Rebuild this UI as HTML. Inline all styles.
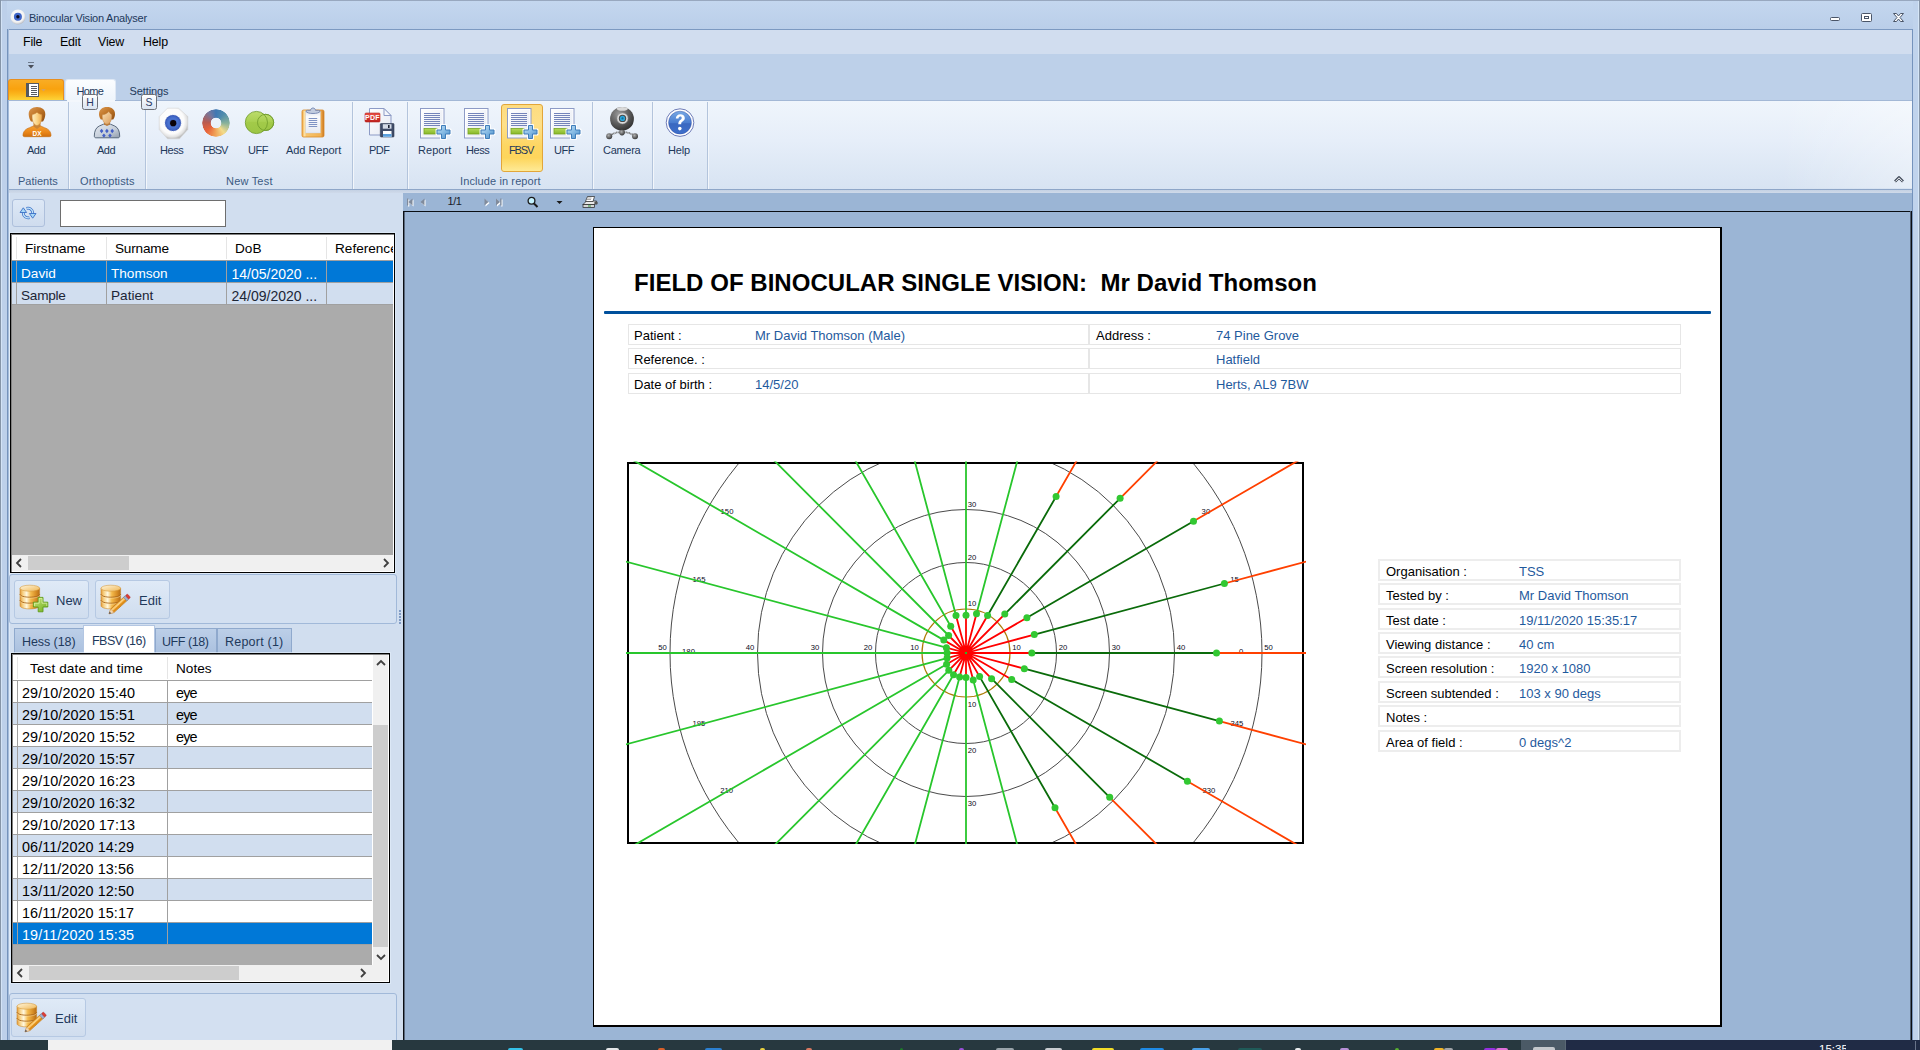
<!DOCTYPE html>
<html><head><meta charset="utf-8"><title>Binocular Vision Analyser</title>
<style>
*{box-sizing:border-box;margin:0;padding:0}
html,body{width:1920px;height:1050px;overflow:hidden;background:#bfd3ed;font-family:"Liberation Sans",sans-serif;}
.a{position:absolute}
.t{position:absolute;white-space:pre;line-height:1;}
.rb{color:#1e395b;font-size:11px}
.g{color:#000;font-size:13.6px}
.r13{font-size:13px;color:#000}
.bl{color:#1f5a9d}
svg{position:absolute;overflow:visible}
</style></head><body>
<!-- window frame -->
<div class="a" style="left:0;top:0;width:1920px;height:1040px;background:#bdd0ea"></div><div class="a" style="left:0;top:0;width:1920px;height:29px;background:linear-gradient(#c4d7ef,#bacee9)"></div>
<div class="a" style="left:0;top:0;width:1920px;height:1px;background:#98a8bf"></div>
<div class="a" style="left:0;top:0;width:1px;height:1040px;background:#8695a8"></div>
<div class="a" style="left:1px;top:1px;width:1px;height:1039px;background:#d3e3f6"></div>
<div class="a" style="left:2px;top:1px;width:5px;height:1039px;background:#bdd0ea"></div>
<div class="a" style="left:1913px;top:1px;width:5px;height:1039px;background:#c0d3ec"></div>
<div class="a" style="left:1918px;top:1px;width:1px;height:1039px;background:#d6e6f7"></div>
<div class="a" style="left:1919px;top:0;width:1px;height:1040px;background:#8695a8"></div>
<!-- title -->
<svg style="left:10px;top:9px" width="16" height="16" viewBox="0 0 16 16"><defs><radialGradient id="eg" cx="45%" cy="40%" r="60%"><stop offset="0" stop-color="#fff"/><stop offset=".75" stop-color="#f2f2f2"/><stop offset="1" stop-color="#b9bcc4"/></radialGradient></defs><circle cx="8" cy="8" r="7.5" fill="url(#eg)"/><circle cx="7.9" cy="7.8" r="4" fill="#3f66c8"/><circle cx="7.9" cy="7.8" r="1.7" fill="#0a0a20"/></svg>
<div class="t" style="left:29px;top:13px;font-size:11px;color:#1e395b;letter-spacing:-0.24px">Binocular Vision Analyser</div>
<!-- window buttons -->
<svg style="left:1828px;top:10px" width="80" height="14" viewBox="0 0 80 14"><g fill="#fff" stroke="#4a5568" stroke-width="1"><rect x="2.5" y="7.5" width="9" height="3" rx="1"/><rect x="33.500" y="3.500" width="10" height="8" rx="1"/><rect x="36.500" y="6.500" width="4" height="2" /><path d="M65.500 3.500h3l2 2.500l2-2.500h3l-3.500 4l3.500 4h-3l-2-2.500l-2 2.500h-3l3.500-4z"/></g></svg>
<!-- inner area -->
<div class="a" style="left:7px;top:29px;width:1906px;height:1px;background:#7c99c1"></div>
<div class="a" style="left:7px;top:29px;width:1px;height:1011px;background:#7593bc"></div><div class="a" style="left:8px;top:29px;width:1px;height:1011px;background:#a4bbda"></div>
<div class="a" style="left:1912px;top:29px;width:1px;height:1011px;background:#7593bc"></div>
<div class="a" style="left:9px;top:30px;width:1903px;height:24px;background:#d1ddef"></div>
<div class="a" style="left:9px;top:54px;width:1903px;height:46px;background:#bdd0e9"></div>
<div class="t" style="left:23px;top:35.500px;font-size:12.400px;color:#000;letter-spacing:-.15px">File</div>
<div class="t" style="left:60px;top:35.500px;font-size:12.400px;color:#000;letter-spacing:-.15px">Edit</div>
<div class="t" style="left:98px;top:35.500px;font-size:12.400px;color:#000;letter-spacing:-.15px">View</div>
<div class="t" style="left:143px;top:35.500px;font-size:12.400px;color:#000;letter-spacing:-.15px">Help</div>
<!-- QAT -->
<svg style="left:27px;top:61px" width="8" height="9" viewBox="0 0 8 9"><rect x="1" y="1" width="6" height="1" fill="#6d7a8c"/><path d="M1 4h6l-3 3.500z" fill="#4a4f5a"/></svg>
<!-- app button + tabs -->
<div class="a" style="left:8px;top:79px;width:56px;height:21px;border:1px solid #e88f1f;border-bottom:none;border-radius:3px 3px 0 0;background:linear-gradient(#f9ad25 0%,#f9a20e 45%,#fbb61c 70%,#fdd338 100%)"></div>
<svg style="left:26px;top:83px" width="22" height="14" viewBox="0 0 22 14"><rect x=".5" y=".5" width="12" height="13" fill="#fff" stroke="#55595f"/><rect x="1" y="1" width="2" height="12" fill="#55595f"/><g fill="#55595f"><rect x="5" y="3" width="6" height="1"/><rect x="5" y="5" width="6" height="1"/><rect x="5" y="7" width="6" height="1"/><rect x="5" y="9" width="6" height="1"/><rect x="5" y="11" width="6" height="1"/></g><path d="M15 6h5l-2.500 2.500z" fill="#d9a45a"/></svg>
<div class="a" style="left:65px;top:79px;width:51px;height:22px;border:1px solid #dfe8f4;border-bottom:none;border-radius:3px 3px 0 0;background:linear-gradient(#fbfdff,#eef4fb)"></div>
<div class="t rb" style="left:76.500px;top:85.500px;letter-spacing:-.65px">Home</div>
<div class="t rb" style="left:129.500px;top:85.500px;letter-spacing:-.1px">Settings</div>
<!-- ribbon -->
<div class="a" style="left:9px;top:100px;width:1903px;height:90px;background:linear-gradient(#eff5fc 0%,#e6eef9 45%,#d7e3f2 100%);border-top:1px solid #a3b8d6;border-bottom:1px solid #8ea6c8"></div>
<div class="a" style="left:67px;top:100px;width:48px;height:2px;background:#f3f7fc"></div>
<div class="a" style="left:1780px;top:101px;width:132px;height:87px;background:linear-gradient(90deg,rgba(255,255,255,0),rgba(255,255,255,.35))"></div>
<!-- group separators -->
<div class="a sep" style="left:68px"></div><div class="a sep" style="left:145px"></div><div class="a sep" style="left:352px"></div><div class="a sep" style="left:407px"></div><div class="a sep" style="left:592px"></div><div class="a sep" style="left:652px"></div><div class="a sep" style="left:707px"></div>
<style>.sep{top:102px;width:2px;height:87px;background:linear-gradient(90deg,#b3c4dc 0 1px,#f2f6fb 1px 2px)}</style>
<!-- FBSV highlight -->
<div class="a" style="left:501px;top:104px;width:42px;height:68px;border:1px solid #e2a63a;border-radius:3px;background:linear-gradient(#fddc80 0%,#fee08a 30%,#fdd662 62%,#fdd55c 80%,#feea96 100%)"></div>
<!-- labels -->
<div class="t rb" style="left:27px;top:145px;letter-spacing:-0.5px">Add</div>
<div class="t rb" style="left:97px;top:145px;letter-spacing:-0.5px">Add</div>
<div class="t rb" style="left:160px;top:145px;letter-spacing:-0.41px">Hess</div>
<div class="t rb" style="left:203px;top:145px;letter-spacing:-1.1px">FBSV</div>
<div class="t rb" style="left:248px;top:145px;letter-spacing:-0.45px">UFF</div>
<div class="t rb" style="left:286px;top:145px;letter-spacing:-0.05px">Add Report</div>
<div class="t rb" style="left:369px;top:145px;letter-spacing:-0.5px">PDF</div>
<div class="t rb" style="left:418px;top:145px;letter-spacing:0.05px">Report</div>
<div class="t rb" style="left:466px;top:145px;letter-spacing:-0.41px">Hess</div>
<div class="t rb" style="left:509px;top:145px;letter-spacing:-1.1px">FBSV</div>
<div class="t rb" style="left:554px;top:145px;letter-spacing:-0.45px">UFF</div>
<div class="t rb" style="left:603px;top:145px;letter-spacing:-0.3px">Camera</div>
<div class="t rb" style="left:668px;top:145px;letter-spacing:-0.17px">Help</div>
<div class="t rb" style="left:18px;top:176px;color:#3b5a82">Patients</div>
<div class="t rb" style="left:80px;top:176px;color:#3b5a82;letter-spacing:0.13px">Orthoptists</div>
<div class="t rb" style="left:226px;top:176px;color:#3b5a82;letter-spacing:0.2px">New Test</div>
<div class="t rb" style="left:460px;top:176px;color:#3b5a82;letter-spacing:0.11px">Include in report</div>
<!-- collapse chevron -->
<svg style="left:1894px;top:175px" width="10" height="8" viewBox="0 0 10 8"><path d="M1 6.500L5 2.500L9 6.500" fill="none" stroke="#3c4656" stroke-width="2.600" stroke-linejoin="round"/><path d="M1.300 6.500L5 2.800L8.700 6.500" fill="none" stroke="#fff" stroke-width="1" /></svg>
<!-- keytips -->
<div class="a kt" style="left:82px">H</div><div class="a kt" style="left:141px">S</div>
<style>.kt{top:94px;width:16px;height:16px;border:1px solid #6e7178;border-radius:2.500px;background:linear-gradient(#fff,#dae4f2);font-size:10.500px;color:#2a3a66;text-align:center;line-height:14px}</style>
<!-- ICON defs -->
<svg width="0" height="0" style="left:0;top:0"><defs>
<linearGradient id="hair" x1="0" y1="0" x2="1" y2="1"><stop offset="0" stop-color="#dc9850"/><stop offset=".5" stop-color="#bd7326"/><stop offset="1" stop-color="#8f4d10"/></linearGradient>
<linearGradient id="face" x1="0" y1="0" x2="1" y2="0"><stop offset="0" stop-color="#fdeec4"/><stop offset=".5" stop-color="#fbd588"/><stop offset="1" stop-color="#eca94a"/></linearGradient>
<linearGradient id="face2" x1="0" y1="0" x2="1" y2="1"><stop offset="0" stop-color="#fbe0b4"/><stop offset="1" stop-color="#d99a58"/></linearGradient>
<linearGradient id="obody" x1="0" y1="0" x2="0" y2="1"><stop offset="0" stop-color="#f6a233"/><stop offset=".6" stop-color="#ea8618"/><stop offset="1" stop-color="#d06f0c"/></linearGradient>
<linearGradient id="gbody" x1="0" y1="0" x2="1" y2="1"><stop offset="0" stop-color="#e4e9f0"/><stop offset=".6" stop-color="#c3ccd8"/><stop offset="1" stop-color="#8f9bab"/></linearGradient>
<radialGradient id="ball" cx="45%" cy="42%" r="58%"><stop offset="0" stop-color="#fff"/><stop offset=".72" stop-color="#fbfbfb"/><stop offset=".9" stop-color="#e2e2e2"/><stop offset="1" stop-color="#bdbdbd"/></radialGradient>
<radialGradient id="iris" cx="50%" cy="50%" r="50%"><stop offset="0" stop-color="#2a46a8"/><stop offset=".55" stop-color="#4b74d0"/><stop offset=".85" stop-color="#3e63c4"/><stop offset="1" stop-color="#2d4aa8"/></radialGradient>
<linearGradient id="grn" x1="0" y1="0" x2="0" y2="1"><stop offset="0" stop-color="#bcdc6c"/><stop offset=".45" stop-color="#a9d052"/><stop offset=".5" stop-color="#a2ca49"/><stop offset="1" stop-color="#9cc544"/></linearGradient>
<linearGradient id="clipb" x1="0" y1="0" x2="1" y2="0"><stop offset="0" stop-color="#f0a63e"/><stop offset=".12" stop-color="#fde3a8"/><stop offset=".2" stop-color="#f7c56e"/><stop offset=".85" stop-color="#f2b050"/><stop offset="1" stop-color="#c9741c"/></linearGradient>
<linearGradient id="paper" x1="0" y1="0" x2="0" y2="1"><stop offset="0" stop-color="#dfe4ee"/><stop offset=".25" stop-color="#fafbfd"/><stop offset="1" stop-color="#e6eaf2"/></linearGradient>
<linearGradient id="pdfr" x1="0" y1="0" x2="0" y2="1"><stop offset="0" stop-color="#ea5148"/><stop offset="1" stop-color="#bf201c"/></linearGradient>
<linearGradient id="pg" x1="0" y1="0" x2="1" y2="1"><stop offset="0" stop-color="#ffffff"/><stop offset="1" stop-color="#e4e8f2"/></linearGradient>
<linearGradient id="gbar" x1="0" y1="0" x2="0" y2="1"><stop offset="0" stop-color="#b3d958"/><stop offset="1" stop-color="#86b727"/></linearGradient>
<linearGradient id="plus" x1="0" y1="0" x2="1" y2="1"><stop offset="0" stop-color="#c4e0f5"/><stop offset=".5" stop-color="#86bbe4"/><stop offset="1" stop-color="#4a8cc8"/></linearGradient>
<radialGradient id="cam" cx="38%" cy="30%" r="75%"><stop offset="0" stop-color="#9a9a9a"/><stop offset=".5" stop-color="#636363"/><stop offset="1" stop-color="#2e2e2e"/></radialGradient>
<radialGradient id="leg" cx="40%" cy="35%" r="70%"><stop offset="0" stop-color="#b0b0b0"/><stop offset="1" stop-color="#303030"/></radialGradient>
<linearGradient id="hlp" x1="0" y1="0" x2="0" y2="1"><stop offset="0" stop-color="#78a9e4"/><stop offset=".5" stop-color="#4a7dd0"/><stop offset=".55" stop-color="#3a68c0"/><stop offset="1" stop-color="#3d6fcb"/></linearGradient>
<linearGradient id="dbg" x1="0" y1="0" x2="1" y2="0"><stop offset="0" stop-color="#e39a3a"/><stop offset=".14" stop-color="#f7cf80"/><stop offset=".34" stop-color="#fff8e0"/><stop offset=".55" stop-color="#f4ba4c"/><stop offset=".8" stop-color="#d88f28"/><stop offset="1" stop-color="#b56d16"/></linearGradient>
<linearGradient id="dbt" x1="0" y1="0" x2="1" y2="1"><stop offset="0" stop-color="#fff6dc"/><stop offset="1" stop-color="#f0b858"/></linearGradient>
<linearGradient id="gplus" x1="0" y1="0" x2="1" y2="1"><stop offset="0" stop-color="#c6e67a"/><stop offset="1" stop-color="#6fae1e"/></linearGradient>
<g id="docplus">
  <rect x=".5" y=".5" width="23.500" height="29.500" fill="#fff" stroke="#8d9bc6"/>
  <rect x="2" y="2" width="20.500" height="26.500" fill="url(#pg)"/>
  <g fill="#7484ba"><rect x="4" y="5" width="16" height="1"/><rect x="4" y="7" width="16" height="1"/><rect x="4" y="9" width="16" height="1"/><rect x="4" y="11" width="16" height="1"/><rect x="4" y="13" width="16" height="1"/><rect x="4" y="15" width="16" height="1"/><rect x="4" y="17" width="16" height="1"/></g>
  <rect x="4" y="20.500" width="13" height="5.500" fill="url(#gbar)" stroke="#78a622" stroke-width=".8"/>
  <path d="M21 17h5v4.500h4.500v5h-4.500v4.500h-5v-4.500h-4.500v-5h4.500z" fill="#fff" stroke="#fff" stroke-width="2" stroke-linejoin="round" opacity=".9"/>
  <path d="M21.500 17.500h4v4.500h4.500v4h-4.500v4.500h-4v-4.500h-4.500v-4h4.500z" fill="url(#plus)" stroke="#3f7dba" stroke-width="1" stroke-linejoin="round"/>
</g>
<g id="dbcyl">
  <path d="M0 3.500v19c0 2 4.500 3.500 10 3.500s10-1.500 10-3.500v-19z" fill="url(#dbg)" stroke="#c8862a" stroke-width=".6"/>
  <path d="M0 10c0 2 4.500 3.300 10 3.300s10-1.300 10-3.300M0 16.500c0 2 4.500 3.300 10 3.300s10-1.300 10-3.300" fill="none" stroke="#a8641a" stroke-width="1"/><path d="M0 11c0 2 4.500 3.300 10 3.300s10-1.300 10-3.300M0 17.500c0 2 4.500 3.300 10 3.300s10-1.300 10-3.300" fill="none" stroke="#ffe9b4" stroke-width=".6" opacity=".8"/>
  <ellipse cx="10" cy="3.500" rx="10" ry="3.300" fill="url(#dbt)" stroke="#d59a3e" stroke-width=".6"/>
</g>
<g id="pencil" transform="rotate(-42.300)"><path d="M0 0l4.500-2.400h19.300v4.800h-19.300z" fill="#f2a52e" stroke="#b9741a" stroke-width=".6" stroke-linejoin="round"/><path d="M4.500-.9h17.500" stroke="#fde7ad" stroke-width="1.300" stroke-dasharray="1 .35"/><path d="M4.500 1.300h17.500" stroke="#d98918" stroke-width="1.200"/><path d="M0 0l4.500-2.400v4.800z" fill="#f3d9b4" stroke="#c99a6a" stroke-width=".4"/><path d="M0 0l1.900-1v2z" fill="#2c3550"/><rect x="21.800" y="-2.400" width="2.600" height="4.800" fill="#9fb0d0" stroke="#5f73a0" stroke-width=".4"/><rect x="24.400" y="-2.400" width="2.600" height="4.800" rx="1" fill="#dc3c34" stroke="#a8241f" stroke-width=".4"/></g>
</defs></svg>
<!-- patient add -->
<svg style="left:21px;top:106px" width="32" height="32" viewBox="0 0 32 32">
<path d="M2 29.500c0-4 2.500-6.500 6.500-7.800l4.500-2h6l4.500 2c4 1.300 6.500 3.800 6.500 7.800c0 .8-.5 1.200-1.500 1.200h-25c-1 0-1.500-.4-1.500-1.200z" fill="url(#obody)" stroke="#c56a0e" stroke-width=".6"/>
<path d="M12.500 17h7v3.500l-3.500 2.500l-3.500-2.500z" fill="#c98538"/>
<path d="M16 1c-5 0-8.500 2.800-8.300 7.500c.1 2.500 1 5 2.300 7l12 0c1.300-2 2.200-4.500 2.300-7c.2-4.700-3.300-7.500-8.300-7.500z" fill="url(#hair)"/>
<path d="M11.200 8.500c1.800-.2 3.300-1 4.800-2.300c1.500 1.300 3 2.100 4.800 2.300c.3 2.500.1 5-.8 7.300c-.8 2-2.300 3.700-4 3.700s-3.200-1.700-4-3.700c-.9-2.300-1.100-4.800-.8-7.300z" fill="url(#face)" stroke="#c98538" stroke-width=".5"/>
<text x="16" y="30" font-family="Liberation Sans" font-weight="bold" font-size="6.500" fill="#fff" text-anchor="middle">DX</text>
</svg>
<!-- orthoptist add -->
<svg style="left:90px;top:106px" width="32" height="33" viewBox="0 0 32 33">
<path d="M4.300 30c0-4.500 1.500-8.500 5-10l4.200-1.800h7l4.200 1.800c3.500 1.500 5 5.500 5 10c0 1.200-.6 1.800-1.800 1.800h-21.800c-1.200 0-1.800-.6-1.800-1.800z" fill="url(#gbody)" stroke="#4c5c70" stroke-width=".9"/>
<g fill="#4560c6"><path d="M11.6 22.8l1.8 2.2l-1.8 2.2l-1.8-2.2zM16.9 22.8l1.8 2.2l-1.8 2.2l-1.8-2.2zM22.2 22.8l1.8 2.2l-1.8 2.2l-1.8-2.2zM13.9 27.400000000000002l1.8 2.2l-1.8 2.2l-1.8-2.2zM20 27.400000000000002l1.8 2.2l-1.8 2.2l-1.8-2.2z"/></g>
<path d="M14 15.500h6v3l-3 1.500l-3-1.500z" fill="#b97a3a"/>
<path d="M17 1c-4.800 0-8 2.700-8 7c0 2 .7 4 1.800 5.500h12.400c1.100-1.500 1.800-3.500 1.800-5.500c0-4.300-3.200-7-8-7z" fill="url(#hair)"/>
<path d="M12.300 8.800c2.700-.2 5-1.400 6.500-3.300c.9 1.500 2 2.500 3 3.200c.2 2.200-.1 4.300-.9 6.200c-.8 1.800-2.200 3.300-3.900 3.300s-3.100-1.500-3.900-3.300c-.8-1.900-1-4-.8-6.100z" fill="url(#face2)" stroke="#b97a3a" stroke-width=".4"/>
</svg>
<!-- hess eye -->
<svg style="left:157px;top:107px" width="33" height="33" viewBox="0 0 33 33">
<path d="M10.500 1.200h11l9.300 8.300v13l-8.300 9.300h-12l-8.300-9.300v-13z" fill="url(#ball)" stroke="#d4d4d4" stroke-width=".6" stroke-linejoin="round"/>
<circle cx="16" cy="16" r="8" fill="url(#iris)"/><circle cx="16" cy="16" r="8" fill="none" stroke="#6f8fe0" stroke-width="1" stroke-dasharray="1 1.300" opacity=".6"/><circle cx="16.200" cy="16.200" r="3.100" fill="#0a0208"/>
</svg>
<!-- fbsv ring -->
<div class="a" style="left:202px;top:109px;width:28px;height:28px;border-radius:50%;background:conic-gradient(from 0deg,#3f78b3 0deg,#4f8cad 40deg,#86b09b 90deg,#f3dc8a 140deg,#f0a055 185deg,#e7623a 230deg,#b85a50 275deg,#76789e 325deg,#3f78b3 360deg);-webkit-mask:radial-gradient(circle,transparent 0 5px,#000 5.600px 13.400px,transparent 14px);mask:radial-gradient(circle,transparent 0 5px,#000 5.600px 13.400px,transparent 14px)"></div>
<!-- uff circles -->
<svg style="left:244px;top:110px" width="32" height="26" viewBox="0 0 32 26">
<circle cx="21.600" cy="12.400" r="8.100" fill="url(#grn)" stroke="#6f9a2a" stroke-width=".8"/>
<circle cx="12.400" cy="12.500" r="11.100" fill="url(#grn)" stroke="#6f9a2a" stroke-width=".8"/>
<circle cx="21.600" cy="12.400" r="8.100" fill="none" stroke="#6f9a2a" stroke-width=".8"/>
</svg>
<!-- clipboard -->
<svg style="left:301px;top:107px" width="24" height="31" viewBox="0 0 24 31">
<rect x="1" y="3" width="22" height="27" rx="1.500" fill="url(#clipb)" stroke="#d98a2a" stroke-width=".8"/>
<rect x="4.600" y="4.500" width="14.800" height="21.500" fill="url(#paper)" stroke="#c7cdd9" stroke-width=".4"/>
<g fill="#7f93c4"><rect x="7.700" y="11" width="8.500" height="1"/><rect x="7.700" y="13" width="8.500" height="1"/><rect x="7.700" y="15" width="8.500" height="1"/><rect x="7.700" y="17" width="8.500" height="1"/><rect x="7.700" y="19" width="8.500" height="1"/></g>
<path d="M5 4.500c0-.8.500-1.200 1.500-1.200h3c.3-1.500 1.200-2.300 2.500-2.300s2.200.8 2.500 2.300h3c1 0 1.500.4 1.500 1.200c-1 1.300-3.500 2-7 2s-6-.7-7-2z" fill="#c3cde0" stroke="#6478a8" stroke-width=".8"/>
</svg>
<!-- pdf -->
<svg style="left:364px;top:107px" width="32" height="31" viewBox="0 0 32 31">
<path d="M5.500 1.500h14.500l7 7v19.500h-21.500z" fill="url(#pg)" stroke="#8d9bc6" stroke-linejoin="round"/>
<path d="M20 1.500v7h7z" fill="#f4f6fb" stroke="#8d9bc6" stroke-linejoin="round"/>
<rect x="1" y="6" width="15" height="9" rx="1" fill="url(#pdfr)" stroke="#b52620" stroke-width=".6"/>
<text x="8.500" y="13.300" font-family="Liberation Sans" font-weight="bold" font-size="7" fill="#fff" text-anchor="middle" letter-spacing=".3">PDF</text>
<rect x="16.300" y="16.500" width="13.700" height="13.500" rx=".8" fill="#3f4c68" stroke="#2f3950" stroke-width=".6"/>
<rect x="18.800" y="17.200" width="8.700" height="4.500" fill="#d4dbe7"/><rect x="24" y="18" width="1.600" height="3" fill="#1c2233"/>
<rect x="19" y="24" width="8.500" height="6" fill="#fff"/><rect x="19" y="27" width="8.500" height="2.800" fill="#5a9fdc"/>
</svg>
<!-- include in report doc+plus -->
<svg style="left:420px;top:108px" width="31" height="31" viewBox="0 0 31 31"><use href="#docplus"/></svg>
<svg style="left:464px;top:108px" width="31" height="31" viewBox="0 0 31 31"><use href="#docplus"/></svg>
<svg style="left:507px;top:108px" width="31" height="31" viewBox="0 0 31 31"><use href="#docplus"/></svg>
<svg style="left:550px;top:108px" width="31" height="31" viewBox="0 0 31 31"><use href="#docplus"/></svg>
<!-- camera -->
<svg style="left:606px;top:106px" width="33" height="34" viewBox="0 0 33 34">
<path d="M3 30.300q6.500-5 13-3.800q6.500-1.200 13 3.800" fill="none" stroke="#7a7a7a" stroke-width="1.800" stroke-dasharray="1.1 .5"/>
<circle cx="16" cy="12.900" r="11.900" fill="url(#cam)"/>
<ellipse cx="16.300" cy="2.800" rx="5.600" ry="1.900" fill="#d9d9d9"/>
<circle cx="16.500" cy="12.400" r="5.500" fill="#dcdcdc" stroke="#9a9a9a" stroke-width=".5"/>
<circle cx="16.500" cy="12.400" r="3.700" fill="#4a4a4a"/>
<circle cx="16.500" cy="12.400" r="2.600" fill="#2ba6da"/><circle cx="16.500" cy="12.400" r="1.100" fill="#136f9a"/>
<circle cx="16" cy="26.600" r="2.800" fill="url(#leg)"/>
<circle cx="3.200" cy="30.300" r="3" fill="url(#leg)"/>
<circle cx="29" cy="30.300" r="3" fill="url(#leg)"/>
</svg>
<!-- help -->
<svg style="left:665px;top:108px" width="30" height="30" viewBox="0 0 30 30">
<circle cx="15" cy="14.600" r="13.800" fill="#fff" stroke="#4a5aa5" stroke-width=".8"/>
<circle cx="15" cy="14.600" r="11.400" fill="url(#hlp)" stroke="#3a56a8" stroke-width=".5"/>
<path d="M10.800 10.600c.2-2.800 1.900-4.400 4.500-4.400c2.700 0 4.500 1.500 4.500 3.800c0 1.700-.9 2.600-2.200 3.500c-1.100.8-1.400 1.300-1.400 2.700h-2.900c0-2.200.5-3.200 1.900-4.200c1.100-.8 1.500-1.200 1.500-2c0-.9-.6-1.400-1.500-1.400c-1 0-1.600.7-1.700 2z" fill="#fff"/>
<circle cx="14.800" cy="20.600" r="1.800" fill="#fff"/>
</svg>
<!-- below ribbon strip + left panel bg -->
<div class="a" style="left:9px;top:190px;width:1903px;height:3px;background:linear-gradient(#c4d1e3,#cfdaea)"></div>
<div class="a" style="left:9px;top:193px;width:394px;height:847px;background:#d1deef"></div><div class="a" style="left:9px;top:193px;width:1px;height:847px;background:#dce9f9"></div>
<!-- refresh button + textbox -->
<div class="a" style="left:12px;top:199px;width:33px;height:28px;border:1px solid #aec0dc;border-radius:3px;background:linear-gradient(#dde8f6,#cfdcee)"></div>
<svg style="left:20px;top:207px" width="16" height="12" viewBox="0 0 16 12"><g fill="none" stroke-linecap="butt"><path d="M3.300 5v1.200a4.700 4.700 0 0 0 6.200 4.400" stroke="#3c70c6" stroke-width="2.800"/><path d="M12.700 7v-1.200a4.700 4.700 0 0 0-6.200-4.400" stroke="#3c70c6" stroke-width="2.800"/><path d="M3.300 5v1.200a4.700 4.700 0 0 0 6.200 4.400" stroke="#c6e8fc" stroke-width="1.200"/><path d="M12.700 7v-1.200a4.700 4.700 0 0 0-6.200-4.400" stroke="#c6e8fc" stroke-width="1.200"/></g><path d="M0 5.500L3.300 .8L6.600 5.500z" fill="#a8d8f8" stroke="#3c70c6" stroke-width=".9" stroke-linejoin="round"/><path d="M9.400 6.500L12.700 11.200L16 6.500z" fill="#a8d8f8" stroke="#3c70c6" stroke-width=".9" stroke-linejoin="round"/></svg>
<div class="a" style="left:60px;top:200px;width:166px;height:27px;border:1px solid #6e6e6e;background:#fff"></div>
<!-- grid 1 -->
<div class="a" style="left:10px;top:233px;width:385px;height:340px;background:#ababab;border:1px solid #000;box-shadow:inset 1px 1px 0 #828282,inset -1px -1px 0 #fff,0 0 0 1px rgba(225,236,250,.7)"></div>
<div class="a" style="left:12px;top:235px;width:381px;height:26px;background:#fff;border-bottom:1px solid #a0a0a0"></div>
<div class="a" style="left:16px;top:237px;width:1px;height:22px;background:#e5e5e5"></div>
<div class="a" style="left:106px;top:237px;width:1px;height:22px;background:#e5e5e5"></div>
<div class="a" style="left:226px;top:237px;width:1px;height:22px;background:#e5e5e5"></div>
<div class="a" style="left:326px;top:237px;width:1px;height:22px;background:#e5e5e5"></div>
<div class="a" style="left:12px;top:261px;width:381px;height:22px;background:#0078d7;border-bottom:1px solid #a0a0a0"></div>
<div class="a" style="left:12px;top:283px;width:381px;height:22px;background:#d1deef;border-bottom:1px solid #a0a0a0"></div>
<div class="a" style="left:16px;top:261px;width:1px;height:43px;background:#a0a0a0"></div>
<div class="a" style="left:106px;top:261px;width:1px;height:43px;background:#a0a0a0"></div>
<div class="a" style="left:226px;top:261px;width:1px;height:43px;background:#a0a0a0"></div>
<div class="a" style="left:326px;top:261px;width:1px;height:43px;background:#a0a0a0"></div>
<div class="t g" style="left:25px;top:242px">Firstname</div>
<div class="t g" style="left:115px;top:242px;letter-spacing:-.2px">Surname</div>
<div class="t g" style="left:235px;top:242px">DoB</div>
<div class="a" style="left:327px;top:236px;width:66px;height:24px;overflow:hidden"><div class="t g" style="left:8px;top:6px">Reference</div></div>
<div class="t g" style="left:21px;top:267px;color:#fff">David</div>
<div class="t g" style="left:111px;top:267px;color:#fff">Thomson</div>
<div class="t g" style="left:231.500px;top:267px;color:#fff;font-size:14px">14/05/2020 ...</div>
<div class="t g" style="left:21px;top:289px;color:#1c2536;letter-spacing:-.25px">Sample</div>
<div class="t g" style="left:111px;top:289px;color:#1c2536">Patient</div>
<div class="t g" style="left:231.500px;top:289px;font-size:14px;color:#1c2536">24/09/2020 ...</div>
<!-- grid1 hscroll -->
<div class="a" style="left:12px;top:555px;width:381px;height:16px;background:#f0f0f0"></div>
<div class="a" style="left:28px;top:556px;width:101px;height:14px;background:#cdcdcd"></div>
<svg style="left:15px;top:558px" width="8" height="10" viewBox="0 0 8 10"><path d="M6 1L2 5l4 4" fill="none" stroke="#404040" stroke-width="1.800"/></svg>
<svg style="left:382px;top:558px" width="8" height="10" viewBox="0 0 8 10"><path d="M2 1l4 4l-4 4" fill="none" stroke="#404040" stroke-width="1.800"/></svg>
<!-- button panel 1 -->
<div class="a" style="left:9px;top:574px;width:388px;height:50px;border:1px solid #a1b9d9;border-radius:3px;background:#d3e0f1"></div>
<div class="a btn" style="left:14px;top:580px;width:75px;height:39px"></div>
<div class="a btn" style="left:95px;top:580px;width:75px;height:39px"></div>
<style>.btn{border:1px solid #b6c9e3;border-radius:3px;background:linear-gradient(#dfeaf7,#d0ddee)}</style>
<svg style="left:20px;top:585px" width="29" height="28" viewBox="0 0 29 28"><use href="#dbcyl" transform="scale(.98 .92)"/><path d="M18.200 12.400h4.800v4.800h4.800v4.800h-4.800v4.800h-4.800v-4.800h-4.800v-4.800h4.800z" fill="url(#gplus)" stroke="#5d9a16" stroke-width=".9" stroke-linejoin="round"/><path d="M19.200 13.400h2.800v4.800h4.800v2.800M19.200 13.400v4.800h-4.800v2.800" fill="none" stroke="#e4f6b8" stroke-width=".8" opacity=".85"/></svg>
<div class="t" style="left:56px;top:594px;font-size:13px;color:#1e395b">New</div>
<svg style="left:101px;top:585px" width="30" height="30" viewBox="0 0 30 30"><use href="#dbcyl" transform="scale(.98 .92)"/><use href="#pencil" x="8" y="28.800"/></svg>
<div class="t" style="left:139px;top:594px;font-size:13px;color:#1e395b">Edit</div>
<!-- splitter dots -->
<svg style="left:398px;top:610px" width="4" height="14" viewBox="0 0 4 14"><g fill="#7f9bc4"><rect x="1" y="0" width="2" height="2"/><rect x="1" y="3" width="2" height="2"/><rect x="1" y="6" width="2" height="2"/><rect x="1" y="9" width="2" height="2"/><rect x="1" y="12" width="2" height="2"/></g></svg>
<!-- tabs -->
<div class="a tb" style="left:14px;width:70px"></div>
<div class="a tb" style="left:155px;width:62px"></div>
<div class="a tb" style="left:217px;width:75px"></div>
<style>.tb{top:628px;height:25px;border:1px solid #8fa9cd;border-bottom:none;background:linear-gradient(#bccfe8,#abc1df)}</style>
<div class="a" style="left:83px;top:625px;width:72px;height:29px;border:1px solid #b3c6e2;border-bottom:none;background:#fff"></div>
<div class="t" style="left:22px;top:636px;font-size:12.500px;letter-spacing:-.08px;color:#1e395b">Hess (18)</div>
<div class="t" style="left:92px;top:635px;font-size:12.500px;letter-spacing:-.53px;color:#1e395b">FBSV (16)</div>
<div class="t" style="left:162px;top:636px;font-size:12.500px;letter-spacing:-.44px;color:#1e395b">UFF (18)</div>
<div class="t" style="left:225px;top:636px;font-size:12.500px;letter-spacing:.22px;color:#1e395b">Report (1)</div>
<!-- grid 2 -->
<div class="a" style="left:11px;top:653px;width:379px;height:330px;background:#ababab;border:1px solid #000;box-shadow:inset 1px 1px 0 #828282,inset -1px -1px 0 #fff,0 0 0 1px rgba(225,236,250,.7)"></div>
<div class="a" style="left:13px;top:655px;width:359px;height:26px;background:#fff;border-bottom:1px solid #a0a0a0"></div>
<div class="a" style="left:17px;top:657px;width:1px;height:22px;background:#e5e5e5"></div>
<div class="a" style="left:167px;top:657px;width:1px;height:22px;background:#e5e5e5"></div>
<div class="t g" style="left:30px;top:662px;letter-spacing:.1px">Test date and time</div>
<div class="t g" style="left:176px;top:662px">Notes</div>
<style>.rw{left:13px;width:359px;height:22px;border-bottom:1px solid #a0a0a0;background:#fff}.rw.al{background:#d1deef}.rw.sel{background:#0078d7}
.rw i{position:absolute;top:0;width:1px;height:21px;background:#a0a0a0}.rw b{position:absolute;left:9px;top:5px;letter-spacing:.07px;font-weight:normal;font-style:normal;font-size:14.400px;line-height:1;white-space:pre;color:#000}.rw b.n{left:163px;letter-spacing:-.8px}</style>
<div class="a rw" style="top:681px"><i style="left:4px"></i><i style="left:154px"></i><b>29/10/2020 15:40</b><b class="n">eye</b></div>
<div class="a rw al" style="top:703px"><i style="left:4px"></i><i style="left:154px"></i><b>29/10/2020 15:51</b><b class="n">eye</b></div>
<div class="a rw" style="top:725px"><i style="left:4px"></i><i style="left:154px"></i><b>29/10/2020 15:52</b><b class="n">eye</b></div>
<div class="a rw al" style="top:747px"><i style="left:4px"></i><i style="left:154px"></i><b>29/10/2020 15:57</b></div>
<div class="a rw" style="top:769px"><i style="left:4px"></i><i style="left:154px"></i><b>29/10/2020 16:23</b></div>
<div class="a rw al" style="top:791px"><i style="left:4px"></i><i style="left:154px"></i><b>29/10/2020 16:32</b></div>
<div class="a rw" style="top:813px"><i style="left:4px"></i><i style="left:154px"></i><b>29/10/2020 17:13</b></div>
<div class="a rw al" style="top:835px"><i style="left:4px"></i><i style="left:154px"></i><b>06/11/2020 14:29</b></div>
<div class="a rw" style="top:857px"><i style="left:4px"></i><i style="left:154px"></i><b>12/11/2020 13:56</b></div>
<div class="a rw al" style="top:879px"><i style="left:4px"></i><i style="left:154px"></i><b>13/11/2020 12:50</b></div>
<div class="a rw" style="top:901px"><i style="left:4px"></i><i style="left:154px"></i><b>16/11/2020 15:17</b></div>
<div class="a rw sel" style="top:923px"><i style="left:4px"></i><i style="left:154px"></i><b style="color:#fff">19/11/2020 15:35</b></div>
<!-- vscroll -->
<div class="a" style="left:372px;top:655px;width:17px;height:310px;background:#fff"></div><div class="a" style="left:373px;top:655px;width:15px;height:310px;background:#f0f0f0"></div>
<div class="a" style="left:373px;top:725px;width:15px;height:222px;background:#cdcdcd"></div>
<svg style="left:375.500px;top:659px" width="10" height="8" viewBox="0 0 10 8"><path d="M1 6l4-4l4 4" fill="none" stroke="#404040" stroke-width="1.800"/></svg>
<svg style="left:375.500px;top:953px" width="10" height="8" viewBox="0 0 10 8"><path d="M1 2l4 4l4-4" fill="none" stroke="#404040" stroke-width="1.800"/></svg>
<!-- hscroll -->
<div class="a" style="left:13px;top:965px;width:375px;height:16px;background:#f0f0f0"></div>
<div class="a" style="left:29px;top:966px;width:210px;height:14px;background:#cdcdcd"></div>
<svg style="left:16px;top:968px" width="8" height="10" viewBox="0 0 8 10"><path d="M6 1L2 5l4 4" fill="none" stroke="#404040" stroke-width="1.800"/></svg>
<svg style="left:359px;top:968px" width="8" height="10" viewBox="0 0 8 10"><path d="M2 1l4 4l-4 4" fill="none" stroke="#404040" stroke-width="1.800"/></svg>
<!-- bottom panel -->
<div class="a" style="left:9px;top:993px;width:388px;height:50px;border:1px solid #a1b9d9;border-radius:3px;background:#d3e0f1"></div>
<div class="a btn" style="left:11px;top:998px;width:75px;height:39px"></div>
<svg style="left:17px;top:1003px" width="30" height="30" viewBox="0 0 30 30"><use href="#dbcyl" transform="scale(.98 .92)"/><use href="#pencil" x="8" y="28.800"/></svg>
<div class="t" style="left:55px;top:1012px;font-size:13px;color:#1e395b">Edit</div>
<!-- viewer -->
<div class="a" style="left:403px;top:193px;width:1509px;height:847px;background:#9bb5d5"></div>
<div class="a" style="left:403px;top:211px;width:1509px;height:1px;background:#0a0e14"></div>
<div class="a" style="left:403px;top:211px;width:1px;height:829px;background:#0a0e14"></div><div class="a" style="left:404px;top:212px;width:1px;height:828px;background:#5a687c"></div>
<div class="a" style="left:1910px;top:211px;width:1px;height:829px;background:#4f5e72"></div><div class="a" style="left:1911px;top:211px;width:1px;height:829px;background:#0a0e14"></div>
<!-- viewer toolbar -->
<svg style="left:405px;top:195px" width="200" height="14" viewBox="0 0 200 14">
<g fill="#fff" transform="translate(1 1)"><rect x="2" y="3.500" width="1.300" height="7"/><path d="M7.500 3.500v7L3.500 7z"/><path d="M19.500 3.500v7L15.500 7z"/><path d="M79.500 3.500v7l4-3.500z"/><path d="M91 3.500v7l4-3.500z"/><rect x="95.200" y="3.500" width="1.300" height="7"/></g><g fill="#808b9c"><rect x="2" y="3.500" width="1.300" height="7"/><path d="M7.500 3.500v7L3.500 7z"/><path d="M19.500 3.500v7L15.500 7z"/>
<path d="M79.500 3.500v7l4-3.500z"/><path d="M91 3.500v7l4-3.500z"/><rect x="95.200" y="3.500" width="1.300" height="7"/></g>
<circle cx="126.500" cy="5.800" r="3.400" fill="#c4f2ff" stroke="#1a1a1a" stroke-width="1.300"/><path d="M129 8.500l3.500 3.500" stroke="#1a1a1a" stroke-width="2"/>
<path d="M151.500 6h6l-3 3z" fill="#1a1a1a"/>
<g transform="translate(-2 0)"><path d="M180 9.500h11.500l2-2v-1.500h-10z" fill="#e8e8e8" stroke="#222" stroke-width=".7"/><path d="M182.500 6.500l2-5h7l-1.500 5z" fill="#fff" stroke="#222" stroke-width=".7"/><rect x="180" y="9.500" width="11.500" height="3" fill="#d6d6d6" stroke="#222" stroke-width=".7"/><rect x="185" y="10.500" width="3" height="1" fill="#2c9a3a"/><path d="M184.500 3h4M184 4.500h4" stroke="#555" stroke-width=".5"/><circle cx="193" cy="8" r="1.800" fill="#555"/></g>
</svg>
<div class="t" style="left:447.500px;top:196px;font-size:11px;letter-spacing:-.4px;color:#1a1a2a">1/1</div>
<!-- page -->
<div class="a" style="left:593px;top:227px;width:1129px;height:800px;background:#fff;border:1px solid #000;border-right-width:2px;border-bottom-width:2px"></div>
<div class="t" style="left:634px;top:271px;font-size:24px;font-weight:bold;color:#000;letter-spacing:.032px">FIELD OF BINOCULAR SINGLE VISION:  Mr David Thomson</div>
<div class="a" style="left:604px;top:311px;width:1107px;height:3px;background:#00509c;border-radius:1px"></div>
<style>.cell{border:1px solid #e6e6e6;background:#fff}.cell2{border:2px solid #ededed;background:#fff}</style>
<!-- patient table -->
<div class="a cell" style="left:628px;top:324px;width:461px;height:21px"></div>
<div class="a cell" style="left:1089px;top:324px;width:592px;height:21px"></div>
<div class="a cell" style="left:628px;top:348px;width:461px;height:21px"></div>
<div class="a cell" style="left:1089px;top:348px;width:592px;height:21px"></div>
<div class="a cell" style="left:628px;top:373px;width:461px;height:21px"></div>
<div class="a cell" style="left:1089px;top:373px;width:592px;height:21px"></div>
<div class="t r13" style="left:634px;top:329px">Patient :</div>
<div class="t r13 bl" style="left:755px;top:329px">Mr David Thomson (Male)</div>
<div class="t r13" style="left:1096px;top:329px">Address :</div>
<div class="t r13 bl" style="left:1216px;top:329px">74 Pine Grove</div>
<div class="t r13" style="left:634px;top:353px">Reference. :</div>
<div class="t r13 bl" style="left:1216px;top:353px">Hatfield</div>
<div class="t r13" style="left:634px;top:378px">Date of birth :</div>
<div class="t r13 bl" style="left:755px;top:378px">14/5/20</div>
<div class="t r13 bl" style="left:1216px;top:378px">Herts, AL9 7BW</div>
<!-- right info table -->
<div class="a cell2" style="left:1378px;top:559px;width:303px;height:22px"></div>
<div class="a cell2" style="left:1378px;top:583px;width:303px;height:22px"></div>
<div class="a cell2" style="left:1378px;top:608px;width:303px;height:22px"></div>
<div class="a cell2" style="left:1378px;top:632px;width:303px;height:22px"></div>
<div class="a cell2" style="left:1378px;top:656px;width:303px;height:22px"></div>
<div class="a cell2" style="left:1378px;top:681px;width:303px;height:22px"></div>
<div class="a cell2" style="left:1378px;top:705px;width:303px;height:22px"></div>
<div class="a cell2" style="left:1378px;top:730px;width:303px;height:22px"></div>
<div class="t r13" style="left:1386px;top:565px">Organisation :</div><div class="t r13 bl" style="left:1519px;top:565px">TSS</div>
<div class="t r13" style="left:1386px;top:589px">Tested by :</div><div class="t r13 bl" style="left:1519px;top:589px">Mr David Thomson</div>
<div class="t r13" style="left:1386px;top:614px">Test date :</div><div class="t r13 bl" style="left:1519px;top:614px">19/11/2020 15:35:17</div>
<div class="t r13" style="left:1386px;top:638px">Viewing distance :</div><div class="t r13 bl" style="left:1519px;top:638px">40 cm</div>
<div class="t r13" style="left:1386px;top:662px">Screen resolution :</div><div class="t r13 bl" style="left:1519px;top:662px">1920 x 1080</div>
<div class="t r13" style="left:1386px;top:687px">Screen subtended :</div><div class="t r13 bl" style="left:1519px;top:687px">103 x 90 degs</div>
<div class="t r13" style="left:1386px;top:711px">Notes :</div>
<div class="t r13" style="left:1386px;top:736px">Area of field :</div><div class="t r13 bl" style="left:1519px;top:736px">0 degs^2</div>
<!-- chart -->
<svg style="left:620px;top:455px" width="692" height="396" viewBox="620 455 692 396">
<defs><clipPath id="cf"><rect x="626" y="461.500" width="680" height="382.500"/></clipPath><clipPath id="ci"><rect x="629" y="464" width="673" height="378"/></clipPath></defs>
<rect x="628" y="463" width="675" height="380" fill="#fff" stroke="#000" stroke-width="2"/>
<g clip-path="url(#ci)" fill="none" stroke="#4a4a4a" stroke-width="1">
<circle cx="966" cy="653" r="90.5"/>
<circle cx="966" cy="653" r="143.5"/>
<circle cx="966" cy="653" r="208.5"/>
<circle cx="966" cy="653" r="296"/>
<circle cx="966" cy="653" r="44" stroke="#ad7c06" stroke-width="1.200"/>
</g>
<g font-family="Liberation Sans" font-size="7.700" fill="#0c0c1c">
<text x="1012.3" y="649.7" text-anchor="start">10</text>
<text x="918.8" y="649.7" text-anchor="end">10</text>
<text x="1058.8" y="649.7" text-anchor="start">20</text>
<text x="872.3" y="649.7" text-anchor="end">20</text>
<text x="1111.8" y="649.7" text-anchor="start">30</text>
<text x="819.3" y="649.7" text-anchor="end">30</text>
<text x="1176.8" y="649.7" text-anchor="start">40</text>
<text x="754.3" y="649.7" text-anchor="end">40</text>
<text x="1264.3" y="649.7" text-anchor="start">50</text>
<text x="666.8" y="649.7" text-anchor="end">50</text>
<text x="967.8" y="606.3" text-anchor="start">10</text>
<text x="967.8" y="706.6" text-anchor="start">10</text>
<text x="967.8" y="559.8" text-anchor="start">20</text>
<text x="967.8" y="753.1" text-anchor="start">20</text>
<text x="967.8" y="506.8" text-anchor="start">30</text>
<text x="967.8" y="806.1" text-anchor="start">30</text>
<text x="1241.1" y="653.5" text-anchor="middle">0</text>
<text x="1234.6" y="581.5" text-anchor="middle">15</text>
<text x="1205.9" y="513.8" text-anchor="middle">30</text>
<text x="727" y="513.9" text-anchor="middle">150</text>
<text x="699" y="581.8" text-anchor="middle">165</text>
<text x="688.5" y="653.5" text-anchor="middle">180</text>
<text x="698.8" y="725.5" text-anchor="middle">195</text>
<text x="726.6" y="792.8" text-anchor="middle">210</text>
<text x="1208.8" y="793" text-anchor="middle">330</text>
<text x="1236.9" y="725.9" text-anchor="middle">345</text>
</g>
<g clip-path="url(#cf)" stroke-width="1.800" fill="none">
<path d="M976.5 613.7L1198.1 -216.3M966 615.3L966 -247M956 615.6L733.9 -216.3M950.7 626.3L517.6 -126.4M948.6 635.5L331.8 16.6M943.8 640.1L189.3 203M946.4 647.7L99.7 420.1M947.1 653L69.1 653M947.1 658.1L99.7 885.9M946.6 664.2L189.3 1103M948.8 670.3L331.8 1289.4M953.5 674.7L517.6 1432.4M959.6 677.1L733.9 1522.3M966 677.4L966 1553M973.2 679.9L1198.1 1522.3" stroke="#28c62c"/>
<path d="M1216.5 653L1862.8 653M1224.4 583.5L1832.3 420.1M1193.5 521.2L1742.7 203M1120.1 498.3L1600.2 16.6M1056.1 496.5L1414.4 -126.4M1055 807.8L1414.4 1432.4M1109.7 797.3L1600.2 1289.4M1187.4 781.3L1742.7 1103M1219.4 721.1L1832.3 885.9" stroke="#ff4000"/>
<path d="M1031.8 653L1216.5 653M1034.3 634.6L1224.4 583.5M1026.9 617.7L1193.5 521.2M1004.8 614.1L1120.1 498.3M987.6 615.5L1056.1 496.5M979.6 676.6L1055 807.8M991.6 678.7L1109.7 797.3M1011.7 679.5L1187.4 781.3M1024.3 668.7L1219.4 721.1" stroke="#0a6b0a"/>
<path d="M966 653L1031.8 653M966 653L1034.3 634.6M966 653L1026.9 617.7M966 653L1004.8 614.1M966 653L987.6 615.5M966 653L976.5 613.7M966 653L966 615.3M966 653L956 615.6M966 653L950.7 626.3M966 653L948.6 635.5M966 653L943.8 640.1M966 653L946.4 647.7M966 653L947.1 653M966 653L947.1 658.1M966 653L946.6 664.2M966 653L948.8 670.3M966 653L953.5 674.7M966 653L959.6 677.1M966 653L966 677.4M966 653L973.2 679.9M966 653L979.6 676.6M966 653L991.6 678.7M966 653L1011.7 679.5M966 653L1024.3 668.7" stroke="#ff0000"/>
</g>
<g fill="#32c832">
<circle cx="1031.8" cy="653" r="3.500"/>
<circle cx="1216.5" cy="653" r="3.500"/>
<circle cx="1034.3" cy="634.6" r="3.500"/>
<circle cx="1224.4" cy="583.5" r="3.500"/>
<circle cx="1026.9" cy="617.7" r="3.500"/>
<circle cx="1193.5" cy="521.2" r="3.500"/>
<circle cx="1004.8" cy="614.1" r="3.500"/>
<circle cx="1120.1" cy="498.3" r="3.500"/>
<circle cx="987.6" cy="615.5" r="3.500"/>
<circle cx="1056.1" cy="496.5" r="3.500"/>
<circle cx="976.5" cy="613.7" r="3.500"/>
<circle cx="966" cy="615.3" r="3.500"/>
<circle cx="956" cy="615.6" r="3.500"/>
<circle cx="950.7" cy="626.3" r="3.500"/>
<circle cx="948.6" cy="635.5" r="3.500"/>
<circle cx="943.8" cy="640.1" r="3.500"/>
<circle cx="946.4" cy="647.7" r="3.500"/>
<circle cx="947.1" cy="653" r="3.500"/>
<circle cx="947.1" cy="658.1" r="3.500"/>
<circle cx="946.6" cy="664.2" r="3.500"/>
<circle cx="948.8" cy="670.3" r="3.500"/>
<circle cx="953.5" cy="674.7" r="3.500"/>
<circle cx="959.6" cy="677.1" r="3.500"/>
<circle cx="966" cy="677.4" r="3.500"/>
<circle cx="973.2" cy="679.9" r="3.500"/>
<circle cx="979.6" cy="676.6" r="3.500"/>
<circle cx="1055" cy="807.8" r="3.500"/>
<circle cx="991.6" cy="678.7" r="3.500"/>
<circle cx="1109.7" cy="797.3" r="3.500"/>
<circle cx="1011.7" cy="679.5" r="3.500"/>
<circle cx="1187.4" cy="781.3" r="3.500"/>
<circle cx="1024.3" cy="668.7" r="3.500"/>
<circle cx="1219.4" cy="721.1" r="3.500"/>
<rect x="965" y="652" width="2" height="2" fill="#22c322"/>
</g></svg>
<!-- taskbar -->
<div class="a" style="left:0;top:1040px;width:1920px;height:10px;background:#27383f"></div>
<div class="a" style="left:48px;top:1040px;width:344px;height:10px;background:#f1f1f1"></div>
<div class="a" style="left:1521px;top:1040px;width:44px;height:10px;background:#4b5a66"></div>
<div class="a" style="left:1565px;top:1040px;width:1px;height:10px;background:#5a6875"></div>
<div class="a" style="left:1566px;top:1040px;width:354px;height:10px;background:#202b45"></div>
<div class="a" style="left:1915px;top:1041px;width:1px;height:9px;background:#69748a"></div>
<style>.bp{top:1048px;height:2px;border-radius:2px 2px 0 0}</style>
<div class="a bp" style="left:508px;width:15px;background:#35c1e8;border-radius:7px 7px 0 0"></div>
<div class="a bp" style="left:606px;width:13px;background:#e4e6e8"></div>
<div class="a bp" style="left:658px;width:7px;background:#d8602a"></div>
<div class="a bp" style="left:705px;width:17px;background:#2b7fd0"></div>
<div class="a bp" style="left:760px;width:5px;background:#e8d040"></div>
<div class="a bp" style="left:806px;width:6px;background:#d87860"></div>
<div class="a bp" style="left:900px;width:3px;background:#1f7a2a"></div>
<div class="a bp" style="left:959px;width:5px;background:#9a50d8"></div>
<div class="a bp" style="left:996px;width:18px;background:#9aa4aa"></div>
<div class="a bp" style="left:1045px;width:17px;background:#c8ccd0;border-radius:6px 6px 0 0"></div>
<div class="a bp" style="left:1092px;width:22px;background:#f2dc28"></div>
<div class="a bp" style="left:1140px;width:24px;background:#1e8ae6"></div>
<div class="a bp" style="left:1192px;width:18px;background:#4aa0e8;border-radius:6px 6px 0 0"></div>
<div class="a bp" style="left:1238px;width:24px;background:#1f5a58"></div>
<div class="a bp" style="left:1295px;width:6px;background:#e8eaec"></div>
<div class="a bp" style="left:1340px;width:9px;background:#b890d8"></div>
<div class="a bp" style="left:1395px;width:4px;background:#58b030"></div>
<div class="a bp" style="left:1434px;width:10px;background:#f0b428"></div><div class="a bp" style="left:1444px;width:9px;background:#a0a4a8"></div>
<div class="a bp" style="left:1484px;width:12px;background:#9430e0"></div><div class="a bp" style="left:1496px;width:12px;background:#e070d8"></div>
<div class="a bp" style="left:1533px;width:22px;background:#c4c8cc;top:1047px;height:3px"></div>
<div class="a" style="left:1819px;top:1044px;width:27px;height:6px;overflow:hidden"><div class="t" style="left:0;top:0;font-size:11.500px;color:#fff">15:35</div></div>
</body></html>
